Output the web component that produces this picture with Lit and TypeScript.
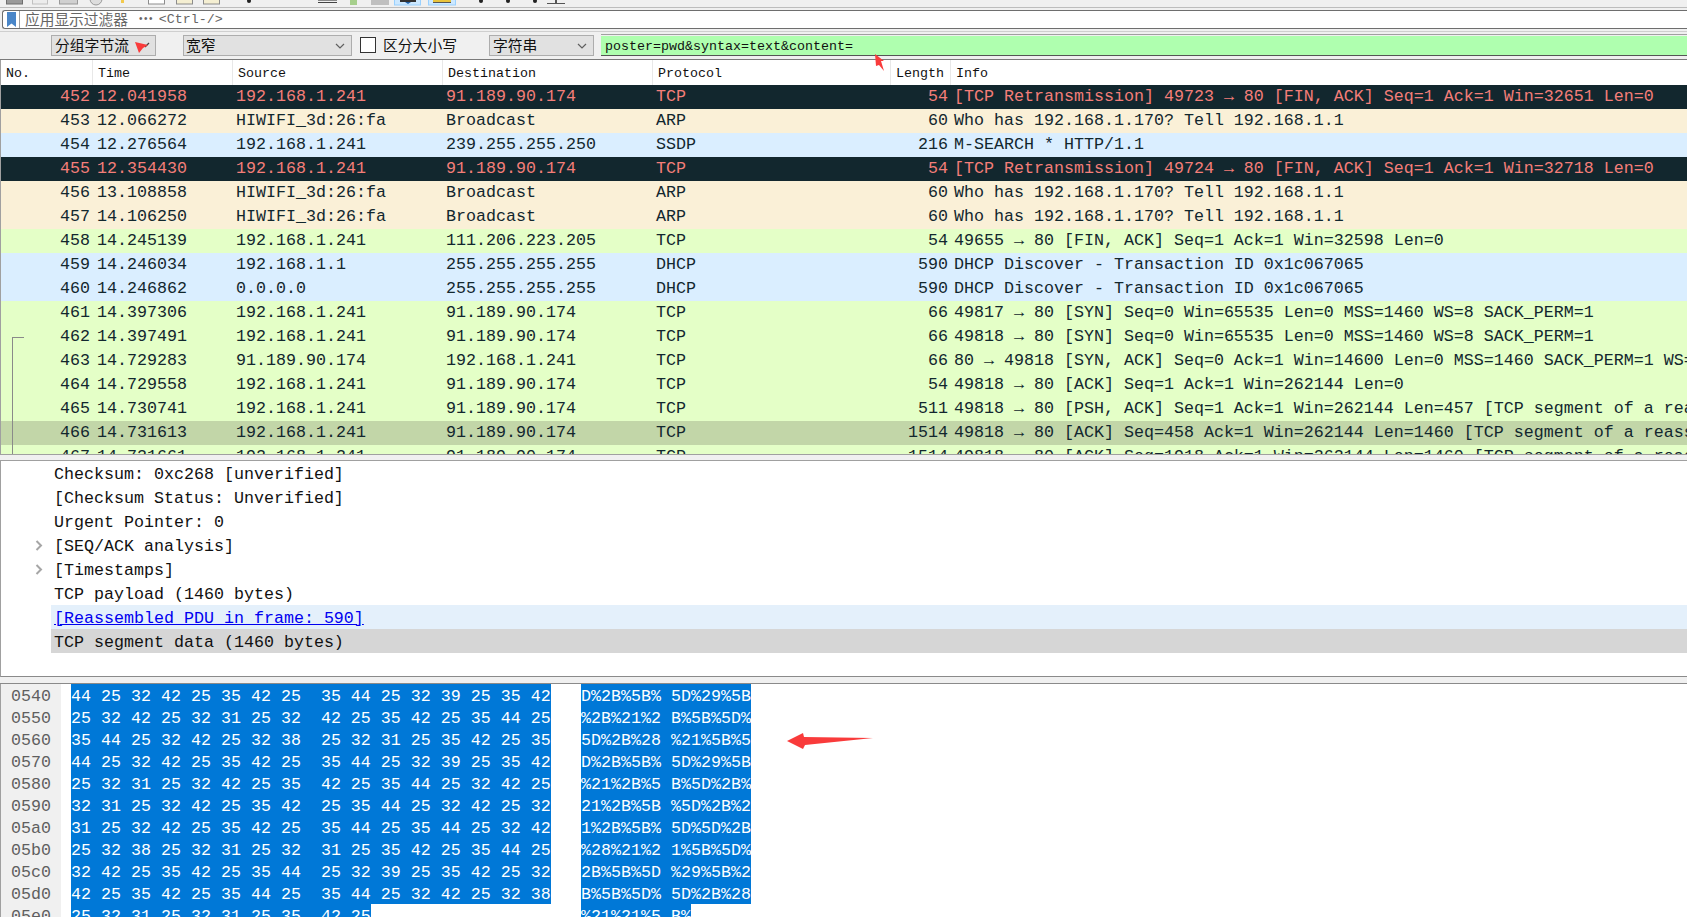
import { LitElement, html, css, svg } from "lit";
import { customElement } from "lit/decorators.js";
import { classMap } from "lit/directives/class-map.js";

type Row = [string, string, string, string, string, string, string, string];

const IP = "192.168.1.241";
const SRV = "91.189.90.174";
const HW = "HIWIFI_3d:26:fa";
const WHO = "Who has 192.168.1.170? Tell 192.168.1.1";
const SEG = "[TCP segment of a reassembled PDU]";

const rows: Row[] = [
  ["bad", "452", "12.041958", IP, SRV, "TCP", "54", "[TCP Retransmission] 49723 → 80 [FIN, ACK] Seq=1 Ack=1 Win=32651 Len=0"],
  ["tan", "453", "12.066272", HW, "Broadcast", "ARP", "60", WHO],
  ["blue", "454", "12.276564", IP, "239.255.255.250", "SSDP", "216", "M-SEARCH * HTTP/1.1"],
  ["bad", "455", "12.354430", IP, SRV, "TCP", "54", "[TCP Retransmission] 49724 → 80 [FIN, ACK] Seq=1 Ack=1 Win=32718 Len=0"],
  ["tan", "456", "13.108858", HW, "Broadcast", "ARP", "60", WHO],
  ["tan", "457", "14.106250", HW, "Broadcast", "ARP", "60", WHO],
  ["green", "458", "14.245139", IP, "111.206.223.205", "TCP", "54", "49655 → 80 [FIN, ACK] Seq=1 Ack=1 Win=32598 Len=0"],
  ["blue", "459", "14.246034", "192.168.1.1", "255.255.255.255", "DHCP", "590", "DHCP Discover - Transaction ID 0x1c067065"],
  ["blue", "460", "14.246862", "0.0.0.0", "255.255.255.255", "DHCP", "590", "DHCP Discover - Transaction ID 0x1c067065"],
  ["green", "461", "14.397306", IP, SRV, "TCP", "66", "49817 → 80 [SYN] Seq=0 Win=65535 Len=0 MSS=1460 WS=8 SACK_PERM=1"],
  ["green", "462", "14.397491", IP, SRV, "TCP", "66", "49818 → 80 [SYN] Seq=0 Win=65535 Len=0 MSS=1460 WS=8 SACK_PERM=1"],
  ["green", "463", "14.729283", SRV, IP, "TCP", "66", "80 → 49818 [SYN, ACK] Seq=0 Ack=1 Win=14600 Len=0 MSS=1460 SACK_PERM=1 WS=8"],
  ["green", "464", "14.729558", IP, SRV, "TCP", "54", "49818 → 80 [ACK] Seq=1 Ack=1 Win=262144 Len=0"],
  ["green", "465", "14.730741", IP, SRV, "TCP", "511", `49818 → 80 [PSH, ACK] Seq=1 Ack=1 Win=262144 Len=457 ${SEG}`],
  ["sel", "466", "14.731613", IP, SRV, "TCP", "1514", `49818 → 80 [ACK] Seq=458 Ack=1 Win=262144 Len=1460 ${SEG}`],
  ["green", "467", "14.731661", IP, SRV, "TCP", "1514", `49818 → 80 [ACK] Seq=1918 Ack=1 Win=262144 Len=1460 ${SEG}`],
];

const details: { text: string; chevron?: boolean; kind?: string }[] = [
  { text: "Checksum: 0xc268 [unverified]" },
  { text: "[Checksum Status: Unverified]" },
  { text: "Urgent Pointer: 0" },
  { text: "[SEQ/ACK analysis]", chevron: true },
  { text: "[Timestamps]", chevron: true },
  { text: "TCP payload (1460 bytes)" },
  { text: "[Reassembled PDU in frame: 590]", kind: "link" },
  { text: "TCP segment data (1460 bytes)", kind: "current" },
];

const hex: [string, string][] = [
  ["0540", "44 25 32 42 25 35 42 25 35 44 25 32 39 25 35 42"],
  ["0550", "25 32 42 25 32 31 25 32 42 25 35 42 25 35 44 25"],
  ["0560", "35 44 25 32 42 25 32 38 25 32 31 25 35 42 25 35"],
  ["0570", "44 25 32 42 25 35 42 25 35 44 25 32 39 25 35 42"],
  ["0580", "25 32 31 25 32 42 25 35 42 25 35 44 25 32 42 25"],
  ["0590", "32 31 25 32 42 25 35 42 25 35 44 25 32 42 25 32"],
  ["05a0", "31 25 32 42 25 35 42 25 35 44 25 35 44 25 32 42"],
  ["05b0", "25 32 38 25 32 31 25 32 31 25 35 42 25 35 44 25"],
  ["05c0", "32 42 25 35 42 25 35 44 25 32 39 25 35 42 25 32"],
  ["05d0", "42 25 35 42 25 35 44 25 35 44 25 32 42 25 32 38"],
  ["05e0", "25 32 31 25 32 31 25 35 42 25"],
];

function hexText(s: string) {
  const b = s.split(" ");
  const a = b.slice(0, 8).join(" ");
  const c = b.slice(8).join(" ");
  return c ? `${a}  ${c}` : a;
}
function asciiText(s: string) {
  const b = s.split(" ").map((x) => String.fromCharCode(parseInt(x, 16)));
  const a = b.slice(0, 8).join("");
  const c = b.slice(8).join("");
  return c ? `${a} ${c}` : a;
}

const chevron = html`<svg class="sel-chev" width="10" height="6" viewBox="0 0 10 6"><path d="M1 1l4 4 4-4" fill="none" stroke="#606060" stroke-width="1.2"/></svg>`;

@customElement("app-root")
export class AppRoot extends LitElement {
  static styles = css`
    :host {
      display: block;
      position: relative;
      height: 917px;
      overflow: hidden;
      background: #f0f0f0;
      font-family: "Liberation Mono", monospace;
      color: #12272e;
    }
    .strip { display: block; height: 7px; border-bottom: 1px solid #bdbdbd; }
    .filter {
      display: flex; align-items: center; height: 19px; margin: 2px 0 0 2px; box-sizing: border-box;
      background: #fff; border: 1px solid #6e6e6e; border-right: 0; border-radius: 3px 0 0 3px;
      font-size: 13.33px; color: #666;
    }
    .bookmark { display: flex; align-items: center; justify-content: center; width: 17px; height: 100%; border-right: 1px solid #a0a0a0; box-sizing: border-box; }
    .ph { font-family: "Noto Sans CJK SC", sans-serif; font-size: 14.7px; margin: 0 0 2px 5px; line-height: 15px; }
    .dots { margin-left: 10px; width: 11px; letter-spacing: -1px; font-size: 10px; }
    .hint { margin-left: 10px; white-space: pre; }
    .find {
      display: flex; height: 31px; box-sizing: border-box; border-bottom: 1px solid #7a7a7a;
      font-family: "Noto Sans CJK SC", sans-serif; font-size: 14.8px; color: #111;
      position: relative;
    }
    .find .rule { position: absolute; left: 0; right: 0; top: 2px; height: 1px; background: #cfcfcf; }
    .btn {
      display: flex; align-items: center; height: 21px; box-sizing: border-box; margin-top: 6px;
      background: #e1e1e1; border: 1px solid #adadad; padding: 0 0 2px 3px; line-height: 17px;
    }
    .b1 { margin-left: 51px; width: 105px; }
    .b2 { margin-left: 27px; width: 169px; position: relative; padding-left: 2px; }
    .b3 { margin-left: 15px; width: 105px; position: relative; }
    .sel-chev { position: absolute; right: 6px; top: 7px; }
    .check { width: 16px; height: 16px; box-sizing: border-box; margin: 8px 0 0 8px; background: #fff; border: 1.3px solid #333; }
    .check-label { margin: 5px 0 0 7px; width: 91px; line-height: 21px; }
    .input {
      flex: 1; height: 22px; margin: 5px 0 0 7px; box-sizing: border-box;
      background: #afffaf; background-clip: content-box; padding: 1px 0 0 0;
      border-top: 1px solid #a0a0a0; border-bottom: 1px solid #555;
      font-family: "Liberation Mono", monospace; font-size: 13.33px; color: #111; line-height: 22px;
    }
    .input span { padding-left: 4px; }
    .list { position: relative; height: 394px; overflow: hidden; background: #fff; border-left: 1px solid #a0a0a0; box-sizing: border-box; }
    .cols { display: grid; grid-template-columns: 91px 140px 210px 210px 238px 60px 1fr; white-space: pre; }
    .head { height: 25px; font-size: 13.33px; line-height: 28px; color: #111; overflow: hidden; }
    .head > div { padding-left: 5px; border-left: 1px solid #e8e8e8; }
    .head > div:first-child { border-left: 0; }
    .row { height: 24px; font-size: 16.67px; line-height: 24px; }
    .row > div { padding-left: 4px; }
    .row > .num { text-align: right; padding: 0 2px 0 0; }
    .row > .t { padding-left: 5px; }
    .row > .i { padding-left: 4px; overflow: hidden; }
    .bad { background: #12272e; color: #f47e79; }
    .tan { background: #faf0d7; }
    .blue { background: #daeeff; }
    .green { background: #e4ffc7; }
    .sel { background: #c2d6a8; }
    .conn { position: absolute; left: 11px; top: 277px; bottom: 0; width: 11px; border: solid #8a8a8a; border-width: 1px 0 0 1px; }
    .split1 { height: 7px; box-sizing: border-box; border-top: 1px solid #a0a0a0; border-bottom: 1px solid #a0a0a0; background: #f0f0f0; }
    .details { height: 216px; box-sizing: border-box; background: #fff; border-left: 1px solid #a0a0a0; border-bottom: 1px solid #8a8a8a; overflow: hidden; }
    .drow { position: relative; height: 24px; margin-left: 50px; padding-left: 3px; font-size: 16.67px; line-height: 28px; white-space: pre; color: #111; }
    .drow svg { position: absolute; left: -16px; top: 7px; }
    .drow.link { background: #e4f0fb; }
    .drow.link span { color: #0000f0; text-decoration: underline; }
    .drow.current { background: #d6d6d6; }
    .split2 { height: 7px; box-sizing: border-box; border-bottom: 1px solid #8a8a8a; }
    .hex { height: 233px; overflow: hidden; background: #fff; border-left: 1px solid #a0a0a0; font-size: 16.67px; line-height: 25px; }
    .hrow { display: flex; height: 22px; white-space: pre; }
    .off { width: 60px; height: 22px; box-sizing: border-box; padding-left: 10px; background: #f0f0f0; color: #5f5f5f; flex: none; }
    .hcol { width: 520px; flex: none; padding-left: 10px; box-sizing: border-box; }
    .hl { display: block; width: fit-content; background: #0078d7; color: #fff; height: 22px; }
    .acol { flex: none; }
    .mark { position: absolute; left: 0; top: 0; pointer-events: none; overflow: visible; }
  `;

  private strip() {
    const box = (x: number, w: number, f: string, s = "#8c8c8c") =>
      svg`<rect x=${x + 0.5} y="-3" width=${w} height="7" fill=${f} stroke=${s}/>`;
    return html`<svg class="strip" width="1687" height="7">
      ${box(6, 16, "#9a9a9a", "#6e6e6e")}${box(32, 15, "#ececec", "#c0c0c0")}${box(59, 18, "#d0d0d0", "#999")}
      <circle cx="96" cy="-1" r="6" fill="#ddd" stroke="#999"/>
      <rect x="121" y="0" width="3" height="3" fill="#f2c94c"/>
      ${box(148, 16, "#fff")}${box(176, 16, "#f5efd2")}${box(203, 16, "#f5efd2")}
      <circle cx="249" cy="1" r="2" fill="#222"/>
      <rect x="318" y="2" width="19" height="1" fill="#444"/><rect x="318" y="0" width="19" height="1" fill="#888"/>
      <rect x="350" y="0" width="7" height="5" fill="#a6cf8c"/>
      <rect x="371" y="0" width="18" height="5" fill="#bfbfbf"/>
      <rect x="394.5" y="-2" width="26" height="7" fill="#cce8ff" stroke="#99d1ff"/>
      <rect x="400" y="0" width="16" height="2" fill="#333"/><path d="M405 2h6l-3 2z" fill="#1f5fa8"/>
      <rect x="428.5" y="-2" width="27" height="7" fill="#cce8ff" stroke="#99d1ff"/>
      <rect x="433" y="0" width="18" height="2" fill="#e8c33c"/><rect x="433" y="2" width="18" height="1" fill="#555"/>
      <circle cx="481" cy="1" r="2" fill="#222"/><circle cx="508" cy="1" r="2" fill="#222"/><circle cx="535" cy="1" r="2" fill="#222"/>
      <rect x="547" y="3" width="18" height="1" fill="#555"/><rect x="555" y="0" width="2" height="3" fill="#555"/>
    </svg>`;
  }

  render() {
    return html`
      ${this.strip()}
      <div class="filter">
        <div class="bookmark"><svg width="9" height="15" viewBox="0 0 9 15"><path d="M0 0h9v15L4.500 11.500 0 15z" fill="#4a86c8"/></svg></div>
        <span class="ph">应用显示过滤器</span><span class="dots">•••</span><span class="hint">&lt;Ctrl-/&gt;</span>
      </div>
      <div class="find">
        <div class="rule"></div>
        <div class="btn b1">分组字节流</div>
        <div class="btn b2">宽窄${chevron}</div>
        <div class="check"></div>
        <div class="check-label">区分大小写</div>
        <div class="btn b3">字符串${chevron}</div>
        <div class="input"><span>poster=pwd&amp;syntax=text&amp;content=</span></div>
      </div>
      <div class="list">
        <div class="cols head">
          <div>No.</div><div>Time</div><div>Source</div><div>Destination</div><div>Protocol</div><div>Length</div><div>Info</div>
        </div>
        ${rows.map(
          (r) => html`<div class="cols row ${classMap({ [r[0]]: true })}">
            <div class="num">${r[1]}</div><div class="t">${r[2]}</div><div>${r[3]}</div><div>${r[4]}</div><div>${r[5]}</div><div class="num">${r[6]}</div><div class="i">${r[7]}</div>
          </div>`
        )}
        <div class="conn"></div>
      </div>
      <div class="split1"></div>
      <div class="details">
        ${details.map(
          (d) => html`<div class="drow ${d.kind ?? ""}">${d.chevron
            ? html`<svg width="8" height="11" viewBox="0 0 8 11"><path d="M1.500 1l4.500 4.500-4.500 4.500" fill="none" stroke="#a6a6a6" stroke-width="2"/></svg>`
            : ""}${d.kind === "link" ? html`<span>${d.text}</span>` : d.text}</div>`
        )}
      </div>
      <div class="split2"></div>
      <div class="hex">
        ${hex.map(
          ([o, b]) => html`<div class="hrow"><div class="off">${o}</div><div class="hcol"><span class="hl">${hexText(b)}</span></div><div class="acol"><span class="hl">${asciiText(b)}</span></div></div>`
        )}
      </div>
      <svg class="mark" width="1687" height="917" viewBox="0 0 1687 917">
        <path d="M787 741L803 733 804 737 873 738 805 745 803 749z" fill="#f93b3b"/>
        <path d="M875 54L884 61 881 61 884 71 879 65 876 66z" fill="#f93b3b"/>
        <path d="M145 47l4-4" stroke="#444" stroke-width="1.200" fill="none"/>
        <path d="M135 42L148 45 143 48 139 53z" fill="#f93b3b"/>
      </svg>
    `;
  }
}
